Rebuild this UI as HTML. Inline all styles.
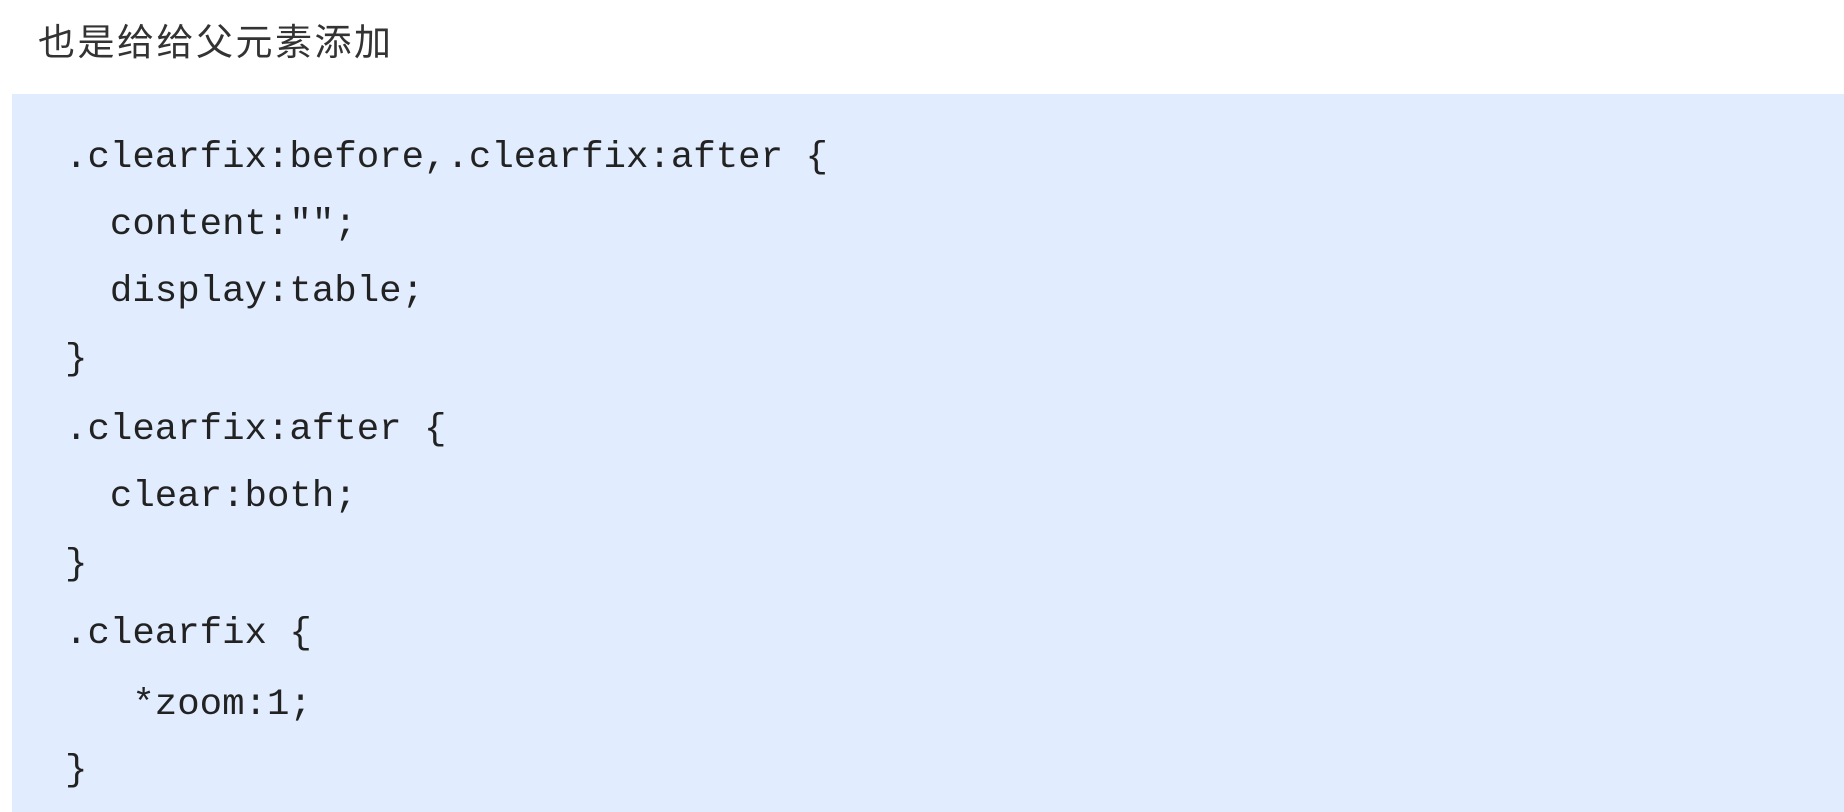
<!DOCTYPE html>
<html><head><meta charset="utf-8"><style>
html,body{margin:0;padding:0;width:1844px;height:812px;overflow:hidden;background:#fff;}
.t{position:absolute;left:38px;top:18px;font:37px/50px "Liberation Sans","Noto Sans CJK SC",sans-serif;color:#333;letter-spacing:2.5px;}
.box{position:absolute;left:12px;top:94px;right:0;bottom:0;background:#e1edfe;}
.c{position:absolute;left:65px;font:37.4px/44px "Liberation Mono",monospace;color:#222;white-space:pre;}
</style></head><body>
<div class="t">也是给给父元素添加</div>
<div class="box"></div>
<div class="c" style="top:136px">.clearfix:before,.clearfix:after {</div>
<div class="c" style="top:203px">  content:"";</div>
<div class="c" style="top:270px">  display:table;</div>
<div class="c" style="top:338px">}</div>
<div class="c" style="top:408px">.clearfix:after {</div>
<div class="c" style="top:475px">  clear:both;</div>
<div class="c" style="top:543px">}</div>
<div class="c" style="top:612px">.clearfix {</div>
<div class="c" style="top:683px">   *zoom:1;</div>
<div class="c" style="top:749px">}</div>
</body></html>
